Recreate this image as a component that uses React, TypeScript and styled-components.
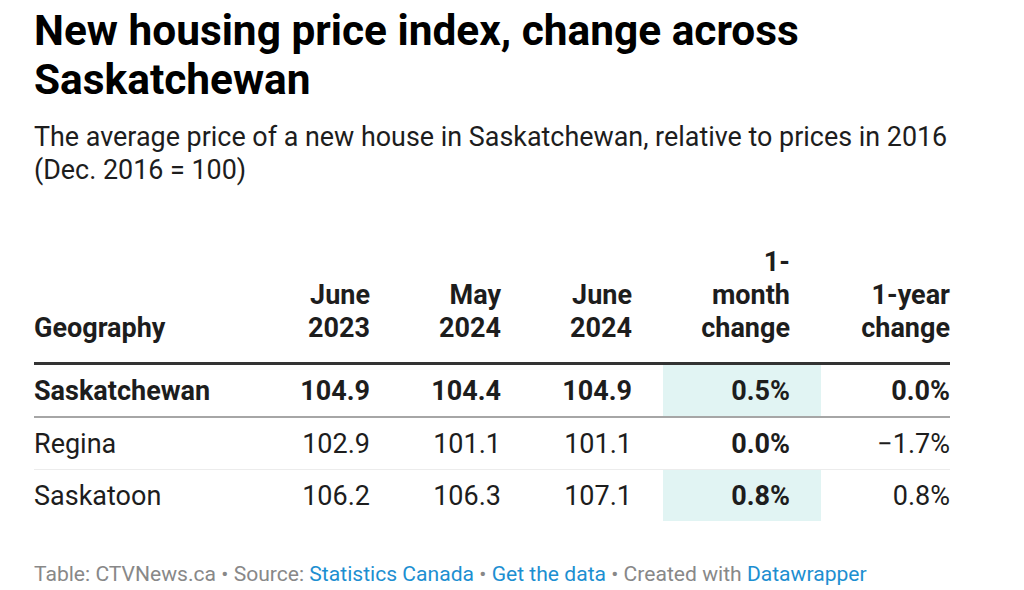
import React from "react";
import styled, { createGlobalStyle } from "styled-components";

const GlobalStyle = createGlobalStyle`
  html, body {
    margin: 0;
    padding: 0;
    background: #fff;
  }
  body {
    font-family: Roboto, "Liberation Sans", sans-serif;
    color: #1d1d1d;
  }
`;

const Page = styled.div`
  width: 1024px;
  height: 590px;
  padding: 6px 74px 0 34px;
  box-sizing: border-box;
  overflow: hidden;
`;

const Title = styled.h1`
  margin: 0;
  font-size: 42.4px;
  font-weight: 700;
  line-height: 49px;
  color: #000;
`;

const Subtitle = styled.p`
  margin: 17px -30px 0 0;
  font-size: 26.9px;
  line-height: 33px;
  color: #1d1d1d;
`;

const Table = styled.div`
  margin-top: 62px;
  display: grid;
  grid-template-columns: 236px 131px 131px 131px 158px 129px;
`;

const HeadCell = styled.div<{ $left?: boolean; $last?: boolean }>`
  height: 116px;
  box-sizing: border-box;
  display: flex;
  align-items: flex-end;
  justify-content: ${p => (p.$left ? "flex-start" : "flex-end")};
  text-align: ${p => (p.$left ? "left" : "right")};
  padding: 0 ${p => (p.$left || p.$last ? 0 : 31)}px 17px 0;
  font-size: 27px;
  font-weight: 700;
  line-height: 33px;
  color: #1d1d1d;
  border-bottom: 3px solid #333;
`;

const Cell = styled.div<{
  $left?: boolean;
  $last?: boolean;
  $bold?: boolean;
  $hl?: boolean;
  $line?: string;
  $lineWidth?: number;
}>`
  height: 51px;
  display: flex;
  align-items: center;
  justify-content: ${p => (p.$left ? "flex-start" : "flex-end")};
  padding-right: ${p => (p.$left || p.$last ? 0 : 31)}px;
  font-size: 27px;
  font-weight: ${p => (p.$bold ? 700 : 400)};
  color: #1d1d1d;
  background: ${p => (p.$hl ? "#e1f4f3" : "transparent")};
  border-bottom: ${p => (p.$line ? `${p.$lineWidth || 1}px solid ${p.$line}` : "none")};
`;

const Footer = styled.div`
  margin-top: 40px;
  font-size: 21.1px;
  line-height: 25px;
  color: #888;
  a {
    color: #1d8fd1;
    text-decoration: none;
  }
`;

type Row = {
  name: string;
  vals: string[];
  oneMonth: string;
  oneYear: string;
  bold?: boolean;
  hl?: boolean;
  line?: string;
  lineWidth?: number;
};

const rows: Row[] = [
  {
    name: "Saskatchewan",
    vals: ["104.9", "104.4", "104.9"],
    oneMonth: "0.5%",
    oneYear: "0.0%",
    bold: true,
    hl: true,
    line: "#a6a6a6",
    lineWidth: 2,
  },
  {
    name: "Regina",
    vals: ["102.9", "101.1", "101.1"],
    oneMonth: "0.0%",
    oneYear: "\u22121.7%",
    line: "#ececec",
  },
  {
    name: "Saskatoon",
    vals: ["106.2", "106.3", "107.1"],
    oneMonth: "0.8%",
    oneYear: "0.8%",
    hl: true,
  },
];

const headers = [
  ["June", "2023"],
  ["May", "2024"],
  ["June", "2024"],
  ["1-", "month", "change"],
];

export default function App() {
  return (
    <Page>
      <GlobalStyle />
      <Title>New housing price index, change across Saskatchewan</Title>
      <Subtitle>
        The average price of a new house in Saskatchewan, relative to prices in
        2016 (Dec. 2016 = 100)
      </Subtitle>
      <Table>
        <HeadCell $left>Geography</HeadCell>
        {headers.map((h, k) => (
          <HeadCell key={k}>
            <span>
              {h.map((l, i) => (
                <React.Fragment key={i}>
                  {i > 0 && <br />}
                  {l}
                </React.Fragment>
              ))}
            </span>
          </HeadCell>
        ))}
        <HeadCell $last>
          <span>
            1-year
            <br />
            change
          </span>
        </HeadCell>
        {rows.map(r => (
          <React.Fragment key={r.name}>
            <Cell $left $bold={r.bold} $line={r.line} $lineWidth={r.lineWidth}>
              {r.name}
            </Cell>
            {r.vals.map((v, i) => (
              <Cell key={i} $bold={r.bold} $line={r.line} $lineWidth={r.lineWidth}>
                {v}
              </Cell>
            ))}
            <Cell $bold $hl={r.hl} $line={r.line} $lineWidth={r.lineWidth}>
              {r.oneMonth}
            </Cell>
            <Cell $last $bold={r.bold} $line={r.line} $lineWidth={r.lineWidth}>
              {r.oneYear}
            </Cell>
          </React.Fragment>
        ))}
      </Table>
      <Footer>
        Table: CTVNews.ca • Source: <a href="#">Statistics Canada</a> •{" "}
        <a href="#">Get the data</a> • Created with <a href="#">Datawrapper</a>
      </Footer>
    </Page>
  );
}
